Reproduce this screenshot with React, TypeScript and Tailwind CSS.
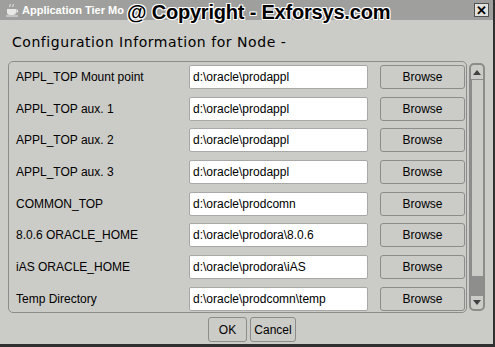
import React from 'react';

interface PathRow {
  label: string;
  value: string;
}

const rows: PathRow[] = [
  { label: 'APPL_TOP Mount point', value: 'd:\\oracle\\prodappl' },
  { label: 'APPL_TOP aux. 1', value: 'd:\\oracle\\prodappl' },
  { label: 'APPL_TOP aux. 2', value: 'd:\\oracle\\prodappl' },
  { label: 'APPL_TOP aux. 3', value: 'd:\\oracle\\prodappl' },
  { label: 'COMMON_TOP', value: 'd:\\oracle\\prodcomn' },
  { label: '8.0.6 ORACLE_HOME', value: 'd:\\oracle\\prodora\\8.0.6' },
  { label: 'iAS ORACLE_HOME', value: 'd:\\oracle\\prodora\\iAS' },
  { label: 'Temp Directory', value: 'd:\\oracle\\prodcomn\\temp' },
];

const CupIcon = () => (
  <svg width="14" height="14" viewBox="0 0 14 14" className="shrink-0">
    <path d="M5 1c1 1-1 2 0 3M8 1c1 1-1 2 0 3" stroke="#f0f0f0" strokeWidth="1" fill="none" />
    <path d="M2 6h9v3a3 3 0 0 1-3 3H5a3 3 0 0 1-3-3z" fill="#e8e8e8" />
    <path d="M11 7h1.5v2H11" stroke="#e8e8e8" fill="none" />
    <path d="M1 13h12" stroke="#e8e8e8" />
  </svg>
);

const App: React.FC = () => {
  return (
    <div
      className="relative flex h-[347px] w-[495px] flex-col overflow-hidden border-r-2 border-b-[3px] border-[#303030] bg-[#cbcbc7] text-black"
      style={{ fontFamily: '"Liberation Sans", Arial, sans-serif' }}
    >
      {/* title bar */}
      <div className="relative flex h-[20px] shrink-0 items-center bg-[#9f9f9d] pl-[5px] pr-[4px]">
        <CupIcon />
        <span className="ml-[3px] text-[11px] font-bold text-white">Application Tier Mo</span>
        <span
          className="absolute left-[127px] top-[-3px] text-[20px] font-bold tracking-[-0.2px] text-black"
          style={{ textShadow: '1px 1px 0 #fff, -1px -1px 0 #fff, 1px -1px 0 #fff, -1px 1px 0 #fff' }}
        >
          @ Copyright - Exforsys.com
        </span>
        <button
          type="button"
          className="ml-auto flex h-[14px] w-[15px] items-center justify-center border border-[#505050] bg-[#e2e2de] text-[13px] font-bold leading-none"
        >
          ✕
        </button>
      </div>

      <div className="flex flex-1 flex-col px-[8px]">
        <h1
          className="mt-[13px] pl-[4px] text-[14px] leading-[18px] tracking-[0.55px]"
          style={{ fontFamily: '"DejaVu Sans", Verdana, sans-serif' }}
        >
          Configuration Information for Node -
        </h1>

        <div className="mt-[10px] flex gap-[2px]">
          <div className="flex h-[252px] w-[462px] flex-col gap-[7.7px] rounded-[5px] border border-[#8c8c8a] pt-[3px] pl-[7px]">
            {rows.map((row) => (
              <div key={row.label} className="flex h-[24px] items-center">
                <span className="w-[173px] text-[12px]">{row.label}</span>
                <div className="flex h-[24px] w-[179px] items-center rounded-[2px] border border-[#a8a8a6] bg-white px-[3px] text-[12px]">
                  {row.value}
                </div>
                <button
                  type="button"
                  className="ml-[12px] h-[24px] w-[85px] rounded-[3px] border border-[#8c8c8a] bg-[#cbcbc7] text-[12px]"
                >
                  Browse
                </button>
              </div>
            ))}
          </div>

          <div className="mt-[2px] flex h-[248px] w-[16px] flex-col overflow-hidden rounded-[5px] border-2 border-[#8c8c8a]">
            <div className="flex h-[15px] items-center justify-center border-b border-[#8c8c8a]">
              <span className="h-0 w-0 border-x-[4px] border-b-[5px] border-x-transparent border-b-[#404040]" />
            </div>
            <div className="flex-1 border-l border-[#8c8c8a]" />
            <div className="h-[20px] bg-[#8e8e8c]" />
            <div className="flex h-[13px] items-center justify-center">
              <span className="h-0 w-0 border-x-[4px] border-t-[5px] border-x-transparent border-t-[#404040]" />
            </div>
          </div>
        </div>

        <div className="mt-[4px] flex justify-center gap-[3px] pl-[11px]">
          <button
            type="button"
            className="h-[25px] w-[39px] rounded-[3px] border border-[#8c8c8a] text-[12px]"
          >
            OK
          </button>
          <button
            type="button"
            className="h-[25px] w-[46px] rounded-[3px] border border-[#8c8c8a] text-[12px]"
          >
            Cancel
          </button>
        </div>
      </div>
    </div>
  );
};

export default App;
